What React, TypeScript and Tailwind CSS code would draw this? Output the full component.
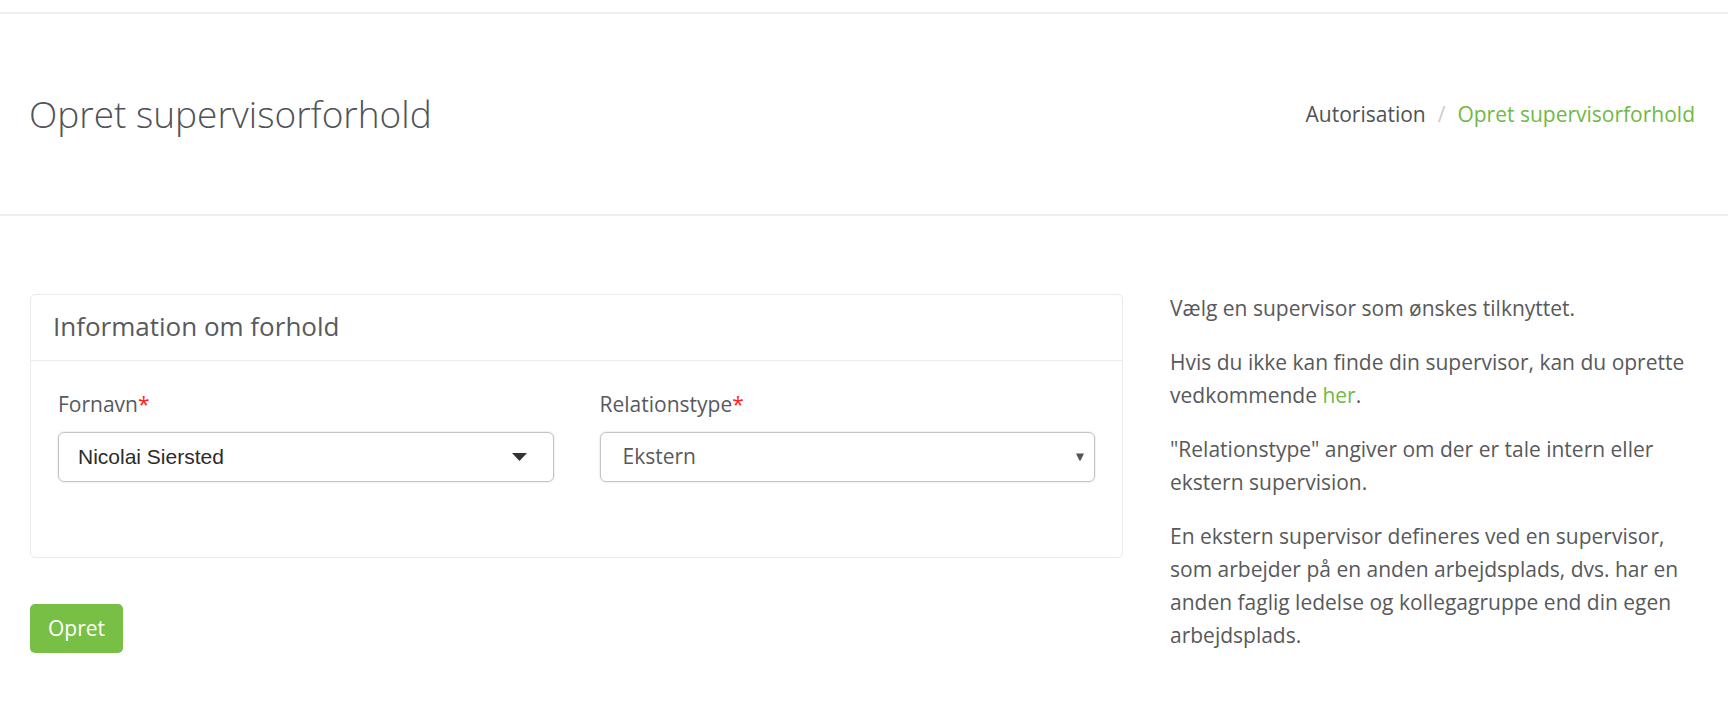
import React from "react";

const green = "text-[#71b944]";

function Label({ children }: { children: React.ReactNode }) {
  return (
    <label className="mb-[12px] block text-[21px] leading-[31px] text-[#575a5e]">
      {children}
      <span className="text-[#ff1f1f]">*</span>
    </label>
  );
}

export default function App() {
  return (
    <div className="min-h-screen bg-white font-['Open_Sans',sans-serif] text-[#575a5e]">
      {/* topbar edge */}
      <div className="h-[14px] border-b-2 border-[#eeeeee]" />

      <header className="flex h-[202px] items-center justify-between border-b-2 border-[#eeeeee] pl-[29px] pr-[33px]">
        <h1 className="text-[37px] font-light leading-[44px] text-[#4f5257]">Opret supervisorforhold</h1>
        <nav className="flex items-center text-[21px] leading-[31px]">
          <span className="text-[#4f5257]">Autorisation</span>
          <span className="px-[12px] text-[#cccccc]">/</span>
          <span className={green}>Opret supervisorforhold</span>
        </nav>
      </header>

      <main className="flex items-start pl-[30px] pt-[76px]">
        <div className="w-[1093px] shrink-0">
          <section className="mt-[2px] rounded-[5px] border border-[#ebebeb]">
            <div className="border-b border-[#ebebeb] px-[22px] pb-[17px] pt-[15px]">
              <h2 className="text-[26px] leading-[33px] text-[#575a5e]">Information om forhold</h2>
            </div>
            <div className="grid grid-cols-2 gap-[46px] px-[27px] pb-[75px] pt-[28px]">
              <div>
                <Label>Fornavn</Label>
                <div className="flex h-[50px] items-center rounded-[6px] border border-[#c4c4c4] pl-[19px] pr-[26px] shadow-[0_0_1px_1px_rgba(0,0,0,0.06)]">
                  <span className="font-['Liberation_Sans',Arial,sans-serif] text-[21px] text-[#2b2b2b]">Nicolai Siersted</span>
                  <svg className="ml-auto" width="15" height="8" viewBox="0 0 15 8">
                    <path d="M0 0 H15 L7.5 8 Z" fill="#333" />
                  </svg>
                </div>
              </div>
              <div>
                <Label>Relationstype</Label>
                <div className="flex h-[50px] items-center rounded-[6px] border border-[#c4c4c4] pl-[22px] pr-[10px] shadow-[0_0_1px_1px_rgba(0,0,0,0.06)]">
                  <span className="text-[21px] text-[#575a5e]">Ekstern</span>
                  <svg className="ml-auto" width="8" height="8" viewBox="0 0 8 8">
                    <path d="M0 0.5 H8 L4.6 7.5 H3.4 Z" fill="#555" />
                  </svg>
                </div>
              </div>
            </div>
          </section>

          <button
            type="button"
            className="mt-[46px] rounded-[5px] bg-[#78bf45] px-[18px] py-[9px] text-[21px] leading-[31px] text-white"
          >
            Opret
          </button>
        </div>

        <aside className="ml-[47px] w-[528px] text-[21px] leading-[33px] text-[#57595c]">
          <p className="mb-[21px]">Vælg en supervisor som ønskes tilknyttet.</p>
          <p className="mb-[21px]">
            Hvis du ikke kan finde din supervisor, kan du oprette vedkommende <a className={green}>her</a>.
          </p>
          <p className="mb-[21px]">"Relationstype" angiver om der er tale intern eller ekstern supervision.</p>
          <p className="mb-[21px]">
            En ekstern supervisor defineres ved en supervisor, som arbejder på en anden arbejdsplads, dvs. har en
            anden faglig ledelse og kollegagruppe end din egen arbejdsplads.
          </p>
        </aside>
      </main>
    </div>
  );
}
